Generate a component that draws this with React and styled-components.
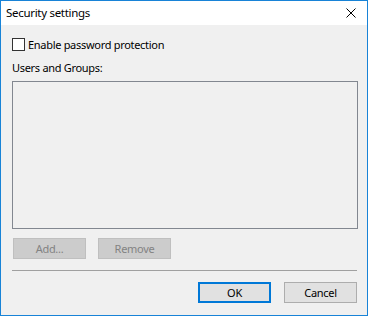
import React, { useState } from "react";
import styled, { createGlobalStyle } from "styled-components";

const GlobalStyle = createGlobalStyle`
  html, body {
    margin: 0;
    padding: 0;
    background: #ffffff;
  }
  body {
    font-family: "Noto Sans", "Open Sans", sans-serif;
    font-size: 11px;
    letter-spacing: -0.3px;
    color: #000;
  }
`;

const Window = styled.div`
  width: 368px;
  height: 316px;
  box-sizing: border-box;
  border: 1px solid #1883d7;
  background: #f0f0f0;
  display: flex;
  flex-direction: column;
`;

const TitleBar = styled.div`
  height: 24px;
  background: #fff;
  display: flex;
  align-items: center;
  justify-content: space-between;
  padding-left: 5px;
`;

const Title = styled.div`
  font-size: 11.5px;
  line-height: 16px;
`;

const CloseButton = styled.div`
  width: 30px;
  height: 24px;
  margin-right: 1px;
  display: flex;
  align-items: center;
  justify-content: center;
`;

const Body = styled.div`
  flex: 1;
  display: flex;
  flex-direction: column;
  padding: 13px 9px 0 11px;
`;

const CheckRow = styled.label`
  display: flex;
  align-items: center;
  gap: 3px;
  height: 13px;
  line-height: 16px;
`;

const Box = styled.span`
  width: 13px;
  height: 13px;
  box-sizing: border-box;
  border: 1px solid #333;
  background: #fff;
  flex: none;
`;

const Label = styled.div`
  margin-top: 9px;
  height: 16px;
  line-height: 16px;
`;

const ListBox = styled.div`
  margin-top: 5px;
  height: 148px;
  box-sizing: border-box;
  border: 1px solid #828790;
  background: #f0f0f0;
`;

const ButtonRow = styled.div`
  display: flex;
  gap: ${(p) => p.gap}px;
  justify-content: ${(p) => (p.end ? "flex-end" : "flex-start")};
  margin-top: ${(p) => p.top}px;
  padding-left: ${(p) => p.left || 0}px;
  padding-right: ${(p) => p.right || 0}px;
`;

const Button = styled.button`
  width: 73px;
  height: 21px;
  box-sizing: border-box;
  padding: 0;
  font-family: inherit;
  font-size: 11px;
  letter-spacing: -0.3px;
  line-height: 16px;
  background: ${(p) => (p.disabled ? "#cccccc" : "#e1e1e1")};
  color: ${(p) => (p.disabled ? "#838383" : "#000")};
  border: ${(p) =>
    p.primary ? "2px solid #0078d7" : p.disabled ? "1px solid #bfbfbf" : "1px solid #adadad"};
  border-radius: 0;
`;

const Separator = styled.div`
  margin-top: 11px;
  height: 1px;
  margin-right: 1px;
  background: #a0a0a0;
`;

export default function App() {
  const [checked, setChecked] = useState(false);
  return (
    <>
      <GlobalStyle />
      <Window>
        <TitleBar>
          <Title>Security settings</Title>
          <CloseButton>
            <svg width="10" height="10" viewBox="0 0 10 10">
              <path d="M0.5 0.5 L9.5 9.5 M9.5 0.5 L0.5 9.5" stroke="#000" strokeWidth="1" />
            </svg>
          </CloseButton>
        </TitleBar>
        <Body>
          <CheckRow onClick={() => setChecked(!checked)}>
            <Box />
            <span>Enable password protection</span>
          </CheckRow>
          <Label>Users and Groups:</Label>
          <ListBox />
          <ButtonRow top={9} gap={12} left={1}>
            <Button disabled>Add...</Button>
            <Button disabled>Remove</Button>
          </ButtonRow>
          <Separator />
          <ButtonRow top={11} gap={13} end right={1}>
            <Button primary>OK</Button>
            <Button>Cancel</Button>
          </ButtonRow>
        </Body>
      </Window>
    </>
  );
}
